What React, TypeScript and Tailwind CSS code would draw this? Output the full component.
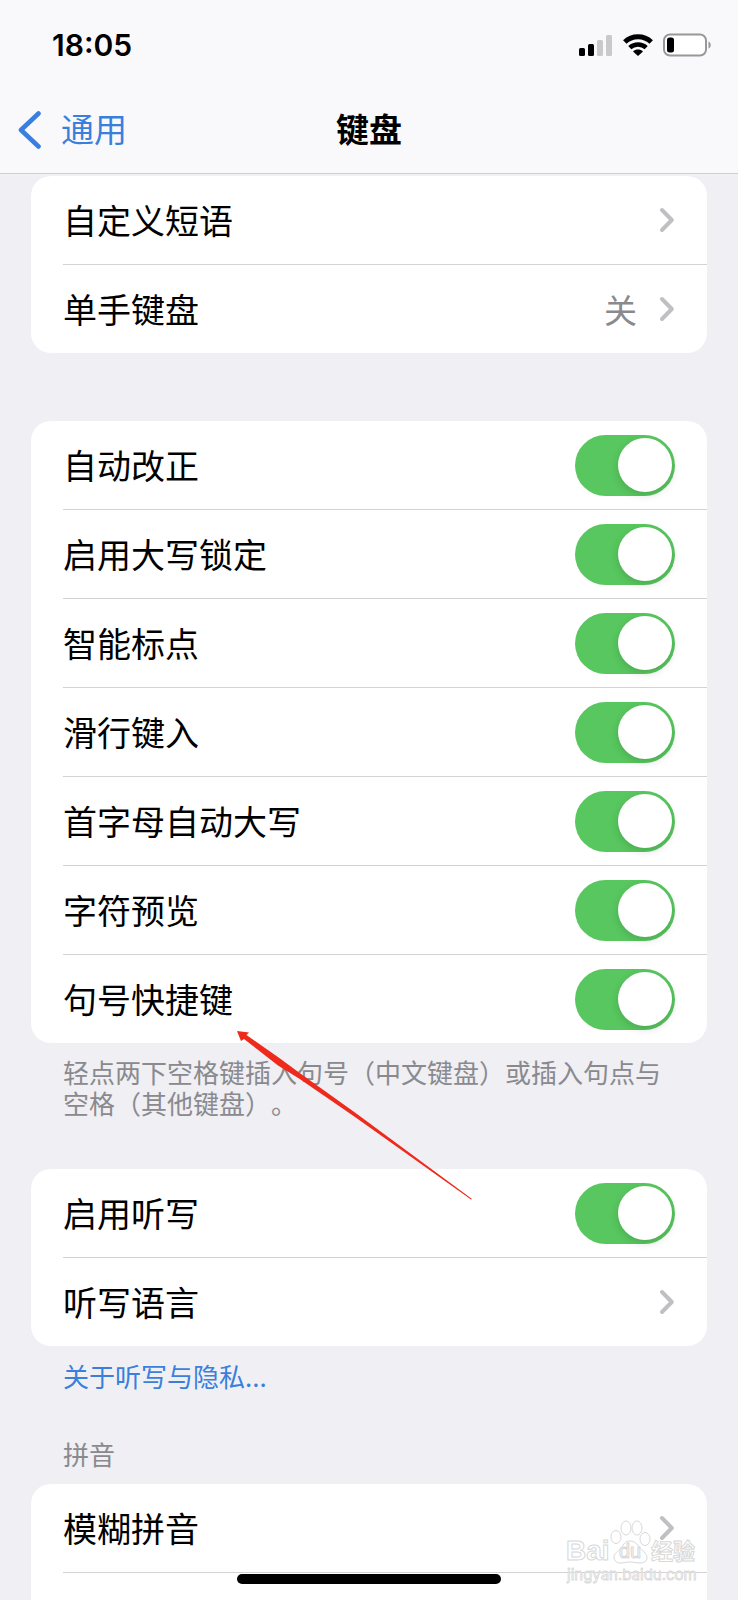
import React, { useState } from "react";

interface RowData {
  label: string;
  value?: string;
}

const navRows: RowData[] = [
  { label: "自定义短语" },
  { label: "单手键盘", value: "关" },
];

const switchRows = [
  "自动改正",
  "启用大写锁定",
  "智能标点",
  "滑行键入",
  "首字母自动大写",
  "字符预览",
  "句号快捷键",
];

const Chevron = () => (
  <svg width="16" height="26" viewBox="0 0 16 26" fill="none" className="shrink-0">
    <path
      d="M3 3 12.800 13 3 23"
      stroke="#c0c0c3"
      strokeWidth="4"
      strokeLinecap="round"
      strokeLinejoin="round"
    />
  </svg>
);

const Card = ({ children }: { children: React.ReactNode }) => (
  <ul className="rounded-[20px] bg-white pl-8 divide-y divide-[#d3d3d6]">
    {children}
  </ul>
);

const NavRow = ({ label, value }: RowData) => (
  <li>
    <button className="flex h-[88px] w-full items-center pr-8 text-left">
      <span className="flex-1">{label}</span>
      {value && <span className="mr-[22px] text-[33px] text-[#8a8a8e]">{value}</span>}
      <Chevron />
    </button>
  </li>
);

const SwitchRow = ({ label }: RowData) => {
  const [on, setOn] = useState(true);

  return (
    <li>
      <label className="flex h-[88px] cursor-pointer items-center justify-between pr-8">
        <span>{label}</span>
        <input
          type="checkbox"
          role="switch"
          checked={on}
          onChange={() => setOn(!on)}
          className="flex h-[61px] w-[100px] cursor-pointer appearance-none items-center rounded-full bg-[#e9e9eb] px-[3px] before:size-[54px] before:rounded-full before:bg-white before:shadow-[0_3px_8px_rgba(0,0,0,0.15)] checked:justify-end checked:bg-[#58c75f]"
        />
      </label>
    </li>
  );
};

const StatusIcons = () => (
  <div className="flex items-center gap-[10px]">
    <svg width="34" height="22" viewBox="0 0 34 22">
      <rect x="0" y="14" width="6" height="8" rx="1.5" fill="#000" />
      <rect x="9" y="10" width="6" height="12" rx="1.5" fill="#000" />
      <rect x="18" y="6" width="6" height="16" rx="1.5" fill="#c9c9ca" />
      <rect x="27" y="1" width="6" height="21" rx="1.5" fill="#c9c9ca" />
    </svg>
    <svg width="30" height="22" viewBox="0 0 30 22" fill="none" stroke="#000">
      <path d="M1.800 8C9.200 1 20.800 1 28.200 8" strokeWidth="5" />
      <path d="M6.800 13.600c4.700-4.200 11.700-4.200 16.400 0" strokeWidth="4.600" />
      <path d="M15 22 10 17.400c2.800-2.400 7.200-2.400 10 0Z" fill="#000" stroke="none" />
    </svg>
    <svg width="49" height="24" viewBox="0 0 49 24">
      <rect x="1" y="1.500" width="42" height="21" rx="6" fill="#fff" stroke="#98989b" strokeWidth="2" />
      <rect x="4" y="4.500" width="7" height="15" rx="2.500" fill="#000" />
      <path d="M45.500 8.500c3 1 3 6 0 7Z" fill="#98989b" />
    </svg>
  </div>
);

const Arrow = () => (
  <svg
    width="236"
    height="170"
    viewBox="0 0 236 170"
    className="pointer-events-none absolute -top-3 left-[206px]"
  >
    <path
      d="M0 0 12 1.500 9.500 4 43 27.500 62 41.500 120 83 235 168 234 168.500 118 86 62 47.500 41 34.500 7 8 4 10Z"
      fill="#ee2a1c"
    />
  </svg>
);

const Watermark = () => (
  <svg
    width="136"
    height="66"
    viewBox="0 0 136 66"
    className="pointer-events-none absolute right-[37px] bottom-[18px] overflow-visible"
    fill="#fff"
    stroke="#d8d8d8"
    strokeWidth="1"
  >
    <text x="1" y="44" fontSize="28" fontWeight="700" className="font-['Liberation_Sans']">
      Bai
    </text>
    <ellipse cx="51" cy="21" rx="5" ry="6.500" />
    <ellipse cx="61" cy="12" rx="5" ry="7" />
    <ellipse cx="72" cy="12" rx="5" ry="7" />
    <ellipse cx="80" cy="23" rx="5" ry="6.500" />
    <path d="M65 25c5 0 7 3 10 7 4 4 7 6 7 10 0 3-3 5-7 5-4 0-6-1-10-1s-6 1-10 1c-4 0-6-3-6-6 0-4 4-5 7-9s4-7 9-7Z" />
    <text x="54" y="42" fontSize="20" className="font-['Liberation_Sans']">
      du
    </text>
    <text x="86" y="43" fontSize="22" fontWeight="700" className="font-['Noto_Sans_CJK_SC']">
      经验
    </text>
    <text x="2" y="64" fontSize="15" strokeWidth="0.800" className="font-['Inter']">
      jingyan.baidu.com
    </text>
  </svg>
);

const App = () => {
  return (
    <div className="relative flex h-screen flex-col overflow-hidden bg-[#efeff4] font-['Noto_Sans_CJK_SC',sans-serif] text-[34px] leading-10 text-black">
      <header className="shrink-0 border-b border-[#cfcfd2] bg-[#f9f9fb]">
        <div className="flex h-[90px] items-center justify-between pr-[26px] pl-[52px]">
          <time className="font-['Inter',sans-serif] text-[30px] font-semibold">18:05</time>
          <StatusIcons />
        </div>
        <div className="grid h-[83px] grid-cols-3 items-center pb-2">
          <button className="flex items-center gap-5 pl-[18px] text-[33px] text-[#3a7fdc]">
            <svg width="23" height="42" viewBox="0 0 23 42" fill="none">
              <path
                d="M20.500 6.500 3 23l17.500 16.500"
                stroke="#3a7fe0"
                strokeWidth="4.600"
                strokeLinecap="round"
                strokeLinejoin="round"
              />
            </svg>
            通用
          </button>
          <h1 className="text-center text-[33px] font-bold">键盘</h1>
        </div>
      </header>

      <main className="flex flex-1 flex-col px-[31px] pt-0.5">
        <Card>
          {navRows.map((row) => (
            <NavRow key={row.label} label={row.label} value={row.value} />
          ))}
        </Card>

        <section className="mt-[68px]">
          <Card>
            {switchRows.map((label) => (
              <SwitchRow key={label} label={label} />
            ))}
          </Card>
          <div className="relative px-8 pt-[13px]">
            <p className="text-[26px] leading-[31px] text-[#8a8a8e] [text-spacing-trim:space-all]">
              轻点两下空格键插入句号（中文键盘）或插入句点与空格（其他键盘）。
            </p>
            <Arrow />
          </div>
        </section>

        <section className="mt-[51px]">
          <Card>
            <SwitchRow label="启用听写" />
            <NavRow label="听写语言" />
          </Card>
          <a href="#privacy" className="mt-[14px] block pl-8 text-[26px] leading-8 text-[#3a7fdc]">
            关于听写与隐私...
          </a>
        </section>

        <section className="mt-[46px] flex flex-1 flex-col">
          <h2 className="pl-8 text-[26px] leading-8 text-[#8a8a8e]">拼音</h2>
          <ul className="mt-[14px] flex-1 rounded-t-[20px] bg-white pl-8 divide-y divide-[#d3d3d6]">
            <NavRow label="模糊拼音" />
            <li />
          </ul>
        </section>
      </main>

      <Watermark />
      <div className="absolute bottom-4 left-1/2 h-[10px] w-[264px] -translate-x-1/2 rounded-full bg-black" />
    </div>
  );
};

export default App;
